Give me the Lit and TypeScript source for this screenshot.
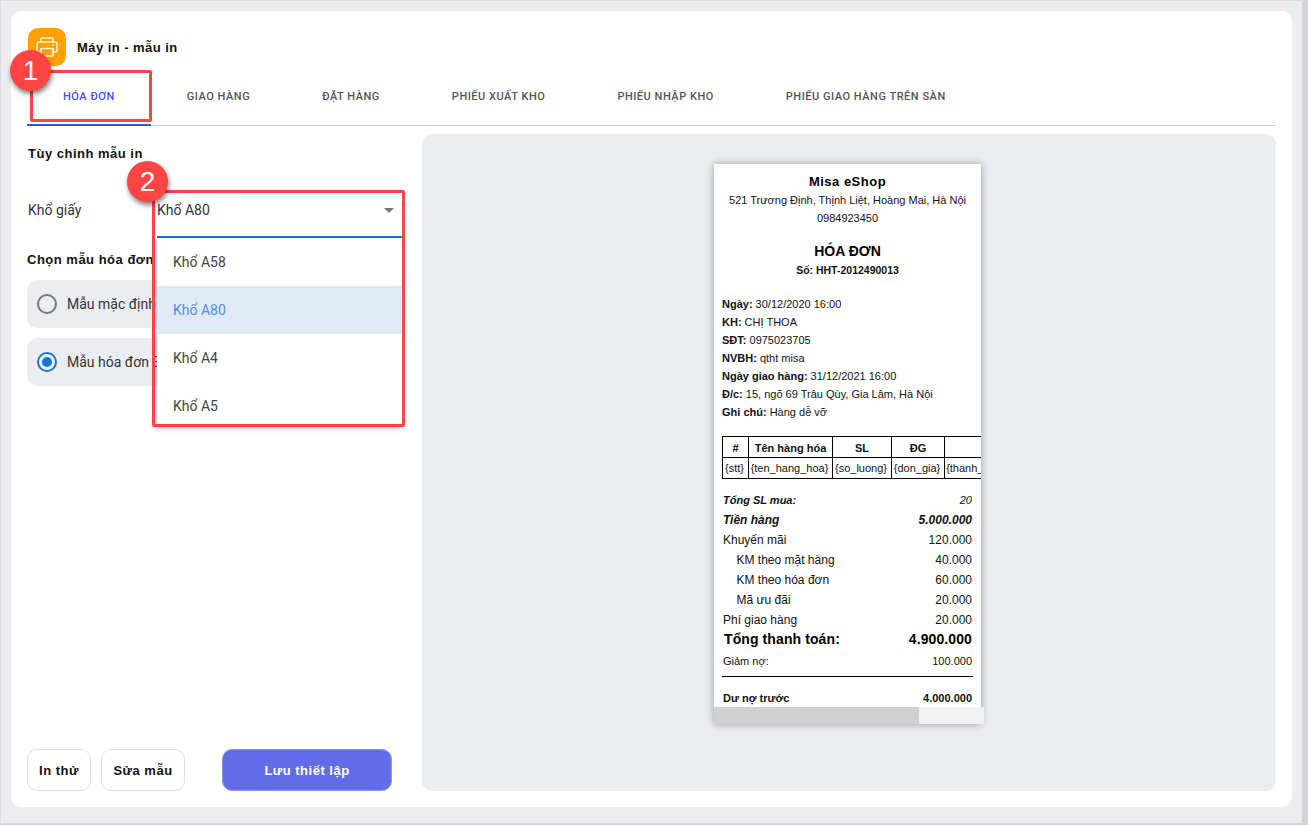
import { LitElement, html, css } from "lit";
import { customElement } from "lit/decorators.js";

@customElement("app-root")
export class AppRoot extends LitElement {
  static styles = css`
    :host { display: block; width: 1308px; height: 825px; overflow: hidden; font-family: Roboto, "Liberation Sans", sans-serif; color: #222; position: relative; }
    * { box-sizing: border-box; }
    .page { width: 1308px; height: 825px; background: #ecedf1; border: solid #d4d4d4; border-width: 1px 6px 2px 1px; border-top-color: #dcdcdc; border-left-color: #dcdcdc; padding: 10px 10px 16px 10px; }
    .card { height: 796px; background: #fff; border-radius: 10px; padding: 17px 16px 16px 16px; display: flex; flex-direction: column; }
    .head { display: flex; align-items: center; gap: 11px; height: 38px; padding-left: 1px; }
    .logo { width: 38px; height: 38px; border-radius: 10px; background: #ff9f00; display: flex; align-items: center; justify-content: center; }
    .title { font: 700 13px "Liberation Sans", sans-serif; letter-spacing: .45px; color: #111; }
    .tabs { display: flex; height: 60px; border-bottom: 1px solid #ccc; }
    .tab { padding: 0 36px; display: flex; align-items: center; font: 500 11px Roboto, sans-serif; letter-spacing: .52px; color: #555; height: 59px; padding-top: 1px; white-space: nowrap; }
    .tab.on { color: #4b4ff0; border-bottom: 2px solid #2f55e8; height: 60px; padding-top: 2px; }
    .body { flex: 1; display: flex; min-height: 0; padding-top: 8px; }
    .left { width: 395px; display: flex; flex-direction: column; padding-top: 12px; }
    .h { font: 700 13px "Liberation Sans", sans-serif; letter-spacing: .5px; color: #111; padding-left: 1px; line-height: 15px; }
    .paper-row { display: flex; align-items: center; height: 34px; margin-top: 32px; }
    .lab { width: 130px; font-size: 14px; color: #333; padding-left: 1px; }
    .select { width: 245px; height: 46px; margin-top: -1px; font-size: 14px; color: #333; display: flex; align-items: center; justify-content: space-between; padding: 0 6px 8px 0; border-bottom: 2px solid #1976d2; align-self: flex-start; position: relative; }
    .caret { width: 0; height: 0; border: 5px solid transparent; border-top: 5px solid #777; border-bottom: 0; margin-right: 2px; }
    .h2 { margin-top: 25px; padding-left: 0; }
    .radios { display: flex; flex-direction: column; gap: 10px; margin-top: 13px; }
    .radio { height: 48px; width: 375px; background: #ecedf1; border-radius: 10px; display: flex; align-items: center; padding-left: 10px; gap: 10px; font-size: 14px; color: #333; }
    .dot { width: 20px; height: 20px; border-radius: 50%; border: 2px solid #777; flex: none; display: flex; align-items: center; justify-content: center; }
    .dot.on { border-color: #1976d2; }
    .dot.on::after { content: ""; width: 10px; height: 10px; border-radius: 50%; background: #1976d2; }
    .actions { margin-top: auto; display: flex; gap: 10px; }
    .btn { height: 42px; border: 1px solid #e0e0e4; border-radius: 10px; background: #fff; font: 700 13px "Liberation Sans", sans-serif; letter-spacing: .5px; color: #111; display: flex; align-items: center; justify-content: center; }
    .b1 { width: 64px; }
    .b2 { width: 84px; }
    .b3 { width: 170px; margin-left: 27px; background: #636ce8; color: #fff; border-color: #8f96ec; }
    .preview { flex: 1; background: #ecedf1; border-radius: 10px; display: flex; justify-content: center; padding-top: 30px; }
    .sheet { width: 267px; height: 560px; background: #fff; box-shadow: 0 0 8px rgba(0,0,0,.35); margin-right: 3px; display: flex; flex-direction: column; }
    .sheet-in { height: 543px; overflow: hidden; font: 11px/18px "Liberation Sans", sans-serif; color: #111; padding: 8px 0 0 8px; flex: none; }
    .c { text-align: center; width: 251px; }
    .shop { font-weight: 700; font-size: 13px; letter-spacing: .5px; line-height: 19px; color: #000; }
    .inv { font-weight: 700; font-size: 14px; margin-top: 15px; line-height: 18px; color: #000; }
    .no { font-weight: 700; font-size: 10.5px; line-height: 20px; }
    .info { margin-top: 15px; }
    b { font-weight: 700; }
    table { border-collapse: collapse; table-layout: fixed; width: 286px; margin-top: 15px; font-size: 11px; line-height: 14px; }
    td, th { border: 1px solid #000; text-align: center; padding: 0; height: 21px; white-space: nowrap; overflow: hidden; font-weight: 400; }
    td { padding-right: 2px; }
    th { font-weight: 700; padding-top: 1px; }
    .sum { margin-top: 11px; width: 250px; padding-left: 1px; }
    .row { display: flex; justify-content: space-between; font-size: 12px; line-height: 20px; }
    .row.ind { padding-left: 13.5px; }
    .it { font-style: italic; font-size: 11px; }
    .it1 { font-weight: 700; }
    .it2 { font-weight: 700; font-style: italic; }
    .tot { font-weight: 700; font-size: 14px; letter-spacing: .1px; line-height: 19px; color: #000; }
    .tot span:first-child { padding-left: 1px; }
    .sm { font-size: 11px; line-height: 24px; }
    hr { border: 0; border-top: 1px solid #000; margin: 3px 0 0 -1px; width: 251px; }
    .db { font-weight: 700; font-size: 11px; line-height: 20px; margin-top: 11px; }
    .sbar { width: 270px; height: 17px; background: #f1f1f1; flex: none; }
    .thumb { width: 205px; height: 17px; background: #d0d0d0; }
    .menu { position: absolute; left: 157px; top: 238px; width: 245px; height: 188px; background: #fff; box-shadow: 0 2px 5px rgba(0,0,0,.3); font-size: 14px; color: #444; overflow: hidden; }
    .opt { height: 48px; display: flex; align-items: center; padding-left: 16px; }
    .opt.sel { background: #e0e9f4; color: #4a90e2; }
    .mark { position: absolute; border: 3px solid #ff4444; border-radius: 2px; pointer-events: none; }
    .m1 { left: 30px; top: 70px; width: 122px; height: 52px; }
    .m2 { left: 152px; top: 190px; width: 253px; height: 237px; }
    .num { position: absolute; width: 41px; height: 41px; border-radius: 50%; background: #ff4444; color: #fff; font: 400 28px/41px "Liberation Sans", sans-serif; text-align: center; box-shadow: 1px 3px 5px rgba(0,0,0,.5); }
    .n1 { left: 10px; top: 50px; }
    .n2 { left: 127px; top: 161px; }
  `;

  render() {
    const tabs = ["HÓA ĐƠN", "GIAO HÀNG", "ĐẶT HÀNG", "PHIẾU XUẤT KHO", "PHIẾU NHẬP KHO", "PHIẾU GIAO HÀNG TRÊN SÀN"];
    return html`
      <div class="page">
        <div class="card">
          <div class="head">
            <div class="logo">
              <svg width="24" height="24" viewBox="0 0 24 24" fill="none" stroke="#fff2dc" stroke-width="1.5" stroke-linejoin="round" stroke-linecap="round">
                <path d="M6 7V3.8C6 3.4 6.4 3 6.8 3h10.4c.4 0 .8.4.8.8V7"/>
                <path d="M6 17H3.5C2.7 17 2 16.3 2 15.5V9c0-1.1.9-2 2-2h16c1.1 0 2 .9 2 2v6.5c0 .8-.7 1.5-1.5 1.5H18"/>
                <path d="M6 13.5h12v6.7c0 .4-.4.8-.8.8H6.8c-.4 0-.8-.4-.8-.8z"/>
                <path d="M18 10h.5"/>
              </svg>
            </div>
            <div class="title">Máy in - mẫu in</div>
          </div>
          <div class="tabs">
            ${tabs.map((t, i) => html`<div class="tab ${i === 0 ? "on" : ""}">${t}</div>`)}
          </div>
          <div class="body">
            <div class="left">
              <div class="h">Tùy chỉnh mẫu in</div>
              <div class="paper-row">
                <div class="lab">Khổ giấy</div>
                <div class="select"><span>Khổ A80</span><span class="caret"></span></div>
              </div>
              <div class="h h2">Chọn mẫu hóa đơn</div>
              <div class="radios">
                <div class="radio"><span class="dot"></span>Mẫu mặc định</div>
                <div class="radio"><span class="dot on"></span>Mẫu hóa đơn 3</div>
              </div>
              <div class="actions">
                <div class="btn b1">In thử</div>
                <div class="btn b2">Sửa mẫu</div>
                <div class="btn b3">Lưu thiết lập</div>
              </div>
            </div>
            <div class="preview">
              <div class="sheet">
                <div class="sheet-in">
                  <div class="c shop">Misa eShop</div>
                  <div class="c">521 Trương Định, Thịnh Liệt, Hoàng Mai, Hà Nội</div>
                  <div class="c">0984923450</div>
                  <div class="c inv">HÓA ĐƠN</div>
                  <div class="c no">Số: HHT-2012490013</div>
                  <div class="info">
                    <div><b>Ngày:</b> 30/12/2020 16:00</div>
                    <div><b>KH:</b> CHỊ THOA</div>
                    <div><b>SĐT:</b> 0975023705</div>
                    <div><b>NVBH:</b> qtht misa</div>
                    <div><b>Ngày giao hàng:</b> 31/12/2021 16:00</div>
                    <div><b>Đ/c:</b> 15, ngõ 69 Trâu Qùy, Gia Lâm, Hà Nội</div>
                    <div><b>Ghi chú:</b> Hàng dễ vỡ</div>
                  </div>
                  <table>
                    <colgroup><col style="width:26px"/><col style="width:84px"/><col style="width:59px"/><col style="width:53px"/><col style="width:64px"/></colgroup>
                    <tr><th>#</th><th>Tên hàng hóa</th><th>SL</th><th>ĐG</th><th></th></tr>
                    <tr><td>{stt}</td><td>{ten_hang_hoa}</td><td>{so_luong}</td><td>{don_gia}</td><td>{thanh_tien}</td></tr>
                  </table>
                  <div class="sum">
                    <div class="row it"><span class="it1">Tổng SL mua:</span><span>20</span></div>
                    <div class="row it2"><span>Tiền hàng</span><span>5.000.000</span></div>
                    <div class="row"><span>Khuyến mãi</span><span>120.000</span></div>
                    <div class="row ind"><span>KM theo mặt hàng</span><span>40.000</span></div>
                    <div class="row ind"><span>KM theo hóa đơn</span><span>60.000</span></div>
                    <div class="row ind"><span>Mã ưu đãi</span><span>20.000</span></div>
                    <div class="row"><span>Phí giao hàng</span><span>20.000</span></div>
                    <div class="row tot"><span>Tổng thanh toán:</span><span>4.900.000</span></div>
                    <div class="row sm"><span>Giảm nợ:</span><span>100.000</span></div>
                    <hr />
                    <div class="row db"><span>Dư nợ trước</span><span>4.000.000</span></div>
                  </div>
                </div>
                <div class="sbar"><div class="thumb"></div></div>
              </div>
            </div>
          </div>
        </div>
      </div>
      <div class="menu">
        <div class="opt">Khổ A58</div>
        <div class="opt sel">Khổ A80</div>
        <div class="opt">Khổ A4</div>
        <div class="opt">Khổ A5</div>
      </div>
      <div class="mark m1"></div>
      <div class="mark m2"></div>
      <div class="num n1">1</div>
      <div class="num n2">2</div>
    `;
  }
}
